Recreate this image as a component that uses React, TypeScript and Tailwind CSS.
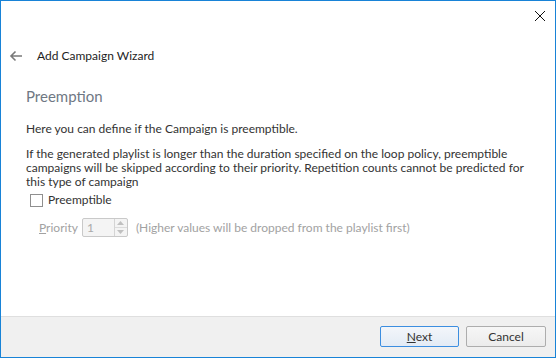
export default function App() {
  return (
    <div
      className="w-[556px] h-[358px] bg-white border border-[#1883d7] flex flex-col text-[12px] text-[#333333]"
      style={{ fontFamily: 'Lato, "Open Sans", sans-serif' }}
    >
      {/* Title bar */}
      <div className="h-[29px] flex justify-end items-center pr-[9px]">
        <svg width="12" height="12" viewBox="0 0 12 12" className="mt-[1px]">
          <path d="M1 1 L11 11 M11 1 L1 11" stroke="#111" strokeWidth="1" />
        </svg>
      </div>

      {/* Header */}
      <div className="h-[48px] flex items-center pt-[3px]">
        <svg width="14" height="12" viewBox="0 0 14 12" className="ml-[8px]">
          <path d="M13 6 H2 M6.5 1.5 L2 6 L6.5 10.5" stroke="#7a7a7a" strokeWidth="1.6" fill="none" />
        </svg>
        <span className="ml-[14px] text-[#1e1e1e] text-[12px]">Add Campaign Wizard</span>
      </div>

      {/* Content */}
      <div className="flex-1 pl-[25px] pr-4">
        <h2 className="text-[15px] text-[#6f7884] leading-[20px] mt-[8px]">Preemption</h2>
        <p className="mt-[16px] leading-[14px]">Here you can define if the Campaign is preemptible.</p>
        <p className="mt-[11px] leading-[14px] whitespace-nowrap">
          If the generated playlist is longer than the duration specified on the loop policy, preemptible
          <br />
          campaigns will be skipped according to their priority. Repetition counts cannot be predicted for
          <br />
          this type of campaign
        </p>
        <label className="flex items-center mt-[3px] ml-[4px] h-[16px]">
          <span className="w-[13px] h-[13px] border border-[#8f8f8f] bg-white" />
          <span className="ml-[5px]">Preemptible</span>
        </label>
        <div className="flex items-center mt-[10px] ml-[13px] text-[#a2a2a2]">
          <span>
            <span className="underline">P</span>riority
          </span>
          <div className="ml-[4px] w-[46px] h-[19px] border border-[#c9c9c9] rounded-[2px] bg-[#f4f4f4] flex">
            <span className="flex-1 pl-[4px] leading-[17px] text-[#aaaaaa]">1</span>
            <div className="w-[13px] border-l border-[#d4d4d4] flex flex-col">
              <div className="flex-1 flex items-center justify-center border-b border-[#dcdcdc]">
                <svg width="7" height="4" viewBox="0 0 7 4">
                  <path d="M0 4 L3.5 0 L7 4 Z" fill="#c0c0c0" />
                </svg>
              </div>
              <div className="flex-1 flex items-center justify-center">
                <svg width="7" height="4" viewBox="0 0 7 4">
                  <path d="M0 0 L3.5 4 L7 0 Z" fill="#c0c0c0" />
                </svg>
              </div>
            </div>
          </div>
          <span className="ml-[8px]">(Higher values will be dropped from the playlist first)</span>
        </div>
      </div>

      {/* Footer */}
      <div className="h-[41px] bg-[#f0f0f0] border-t border-[#dfdfdf] flex items-center justify-end gap-[7px] pr-[9px] pb-[1px]">
        <button className="w-[79px] h-[21px] border border-[#3c8ee0] rounded-[2px] bg-gradient-to-b from-[#f3f6fa] to-[#e3ebf5] text-[#333333] text-[12px] leading-[19px]">
          <span className="underline">N</span>ext
        </button>
        <button className="w-[80px] h-[21px] border border-[#adadad] rounded-[2px] bg-gradient-to-b from-[#f6f6f6] to-[#ececec] text-[#333333] text-[12px] leading-[19px]">
          Cancel
        </button>
      </div>
    </div>
  );
}
